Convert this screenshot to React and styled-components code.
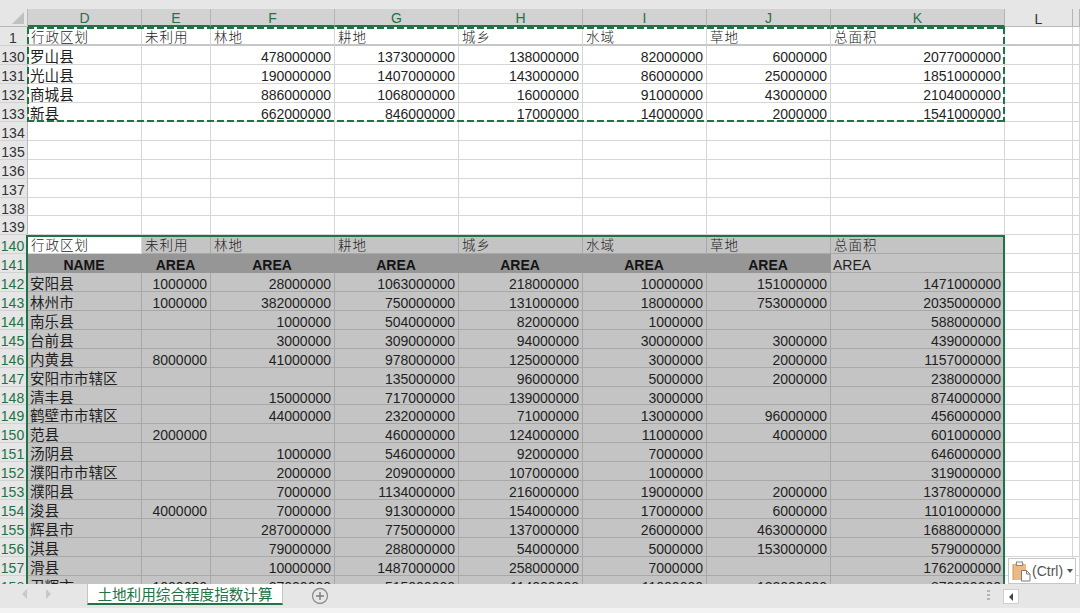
import styled, { createGlobalStyle } from 'styled-components';

const GlobalStyle = createGlobalStyle`
   html, body {
      margin: 0;
      padding: 0;
      background: #ffffff;
   }
`;

const GREEN = '#217346';
const COLUMNS = '28px 114px 69px 124px 124px 124px 124px 124px 174px 68px 1fr';
const FONT = '"Liberation Sans", "Noto Sans CJK SC", sans-serif';

const Window = styled.div`
   color: #1f1f1f;
   display: flex;
   flex-direction: column;
   font-family: ${FONT};
   height: 613px;
   overflow: hidden;
   position: relative;
   width: 1080px;
`;
const TopStrip = styled.div`
   background: #e6e6e6;
   flex: 0 0 9px;
`;
const Sheet = styled.div`
   flex: 1;
   min-height: 0;
   overflow: hidden;
`;
const HeaderRow = styled.div`
   display: grid;
   grid-template-columns: ${COLUMNS};
   height: 18px;
`;
const Corner = styled.div`
   background: #e6e6e6;
   border-bottom: 1px solid #b8b8b8;
   border-right: 1px solid #b8b8b8;
   box-sizing: border-box;
   position: relative;
   &:after {
      border-bottom: 12px solid #c0c0c0;
      border-left: 12px solid transparent;
      bottom: 2px;
      content: '';
      position: absolute;
      right: 3px;
   }
`;
const ColHead = styled.div`
   align-items: center;
   background: ${p => (p.$active ? '#d2d2d2' : '#e6e6e6')};
   border-bottom: ${p => (p.$active ? `2px solid ${GREEN}` : '1px solid #b8b8b8')};
   border-right: 1px solid #b4b4b4;
   box-sizing: border-box;
   color: ${p => (p.$active ? GREEN : '#333333')};
   display: flex;
   font-size: 14px;
   justify-content: center;
   line-height: 14px;
   padding-top: 2px;
`;
const Body = styled.div`
   position: relative;
`;
// the sheet's rows average 18.9px: nine of 19px, then one of 18px
const Row = styled.div`
   display: grid;
   grid-template-columns: ${COLUMNS};
   grid-template-rows: minmax(0, 1fr);
   height: 19px;
   &:nth-child(10n) {
      height: 18px;
   }
`;
const RowHead = styled.div`
   align-items: center;
   background: #e6e6e6;
   border-bottom: 1px solid #d2d2d2;
   border-right: ${p => (p.$active ? `2px solid ${GREEN}` : '1px solid #b8b8b8')};
   box-sizing: border-box;
   color: ${p => (p.$active ? GREEN : '#333333')};
   display: flex;
   font-size: 14px;
   justify-content: center;
   line-height: 14px;
   overflow: hidden;
   padding: 4px 1px 0 0;
`;
const tones = {
   plain: { background: '#ffffff', line: '#d6d6d6' },
   grey: { background: '#c4c4c4', line: '#a8a8a8' },
   dark: { background: '#969696', line: '#969696' },
};
const Cell = styled.div`
   align-items: center;
   background: ${p => tones[p.$tone].background};
   border-bottom: ${p => (p.$heavy ? '2px solid #c6c6c6' : `1px solid ${tones[p.$tone].line}`)};
   border-right: 1px solid ${p => tones[p.$tone].line};
   box-sizing: border-box;
   display: flex;
   font-size: 14px;
   justify-content: ${p => p.$align};
   line-height: 14px;
   overflow: hidden;
   padding: 4px 3px 0 2px;
   white-space: nowrap;
`;
const Name = styled.span`
   font-size: 14.6px;
`;
const Label = styled.span`
   color: #222222;
   font-size: 13.5px;
   font-weight: 300;
   letter-spacing: 1px;
   margin-left: 1px;
`;
const Strong = styled.span`
   color: #141414;
   font-weight: 700;
`;
const dash = `${GREEN} 0 7px, transparent 7px 10px`;
const CopyFrame = styled.div`
   background:
      repeating-linear-gradient(90deg, ${dash}) left top / 100% 2px no-repeat,
      repeating-linear-gradient(90deg, ${dash}) left bottom / 100% 2px no-repeat,
      repeating-linear-gradient(180deg, ${dash}) left top / 2px 100% no-repeat,
      repeating-linear-gradient(180deg, ${dash}) right top / 2px 100% no-repeat;
   height: 95px;
   left: 27px;
   pointer-events: none;
   position: absolute;
   top: 0;
   width: 978px;
`;
const SelectFrame = styled.div`
   border: 2px solid ${GREEN};
   box-sizing: border-box;
   height: 420px;
   left: 26px;
   pointer-events: none;
   position: absolute;
   top: 208px;
   width: 979px;
`;
const PasteButton = styled.div`
   align-items: center;
   background: #ffffff;
   border: 1px solid #c6c6c6;
   bottom: 29px;
   box-sizing: border-box;
   color: #555555;
   display: flex;
   font-size: 14px;
   height: 26px;
   left: 1008px;
   padding-left: 3px;
   position: absolute;
   width: 68px;
`;
const Caret = styled.span`
   border-left: 3px solid transparent;
   border-right: 3px solid transparent;
   border-top: 4px solid #555555;
   margin-left: 4px;
`;
const Footer = styled.div`
   background: #e6e6e6;
   border-bottom: 5px solid #f3f3f3;
   display: flex;
   flex: 0 0 24px;
   height: 24px;
`;
const SheetNav = styled.div`
   align-items: center;
   box-sizing: border-box;
   display: flex;
   flex: 0 0 87px;
   gap: 19px;
   padding: 0 0 4px 22px;
`;
const NavArrow = styled.span`
   border-bottom: 5px solid transparent;
   border-top: 5px solid transparent;
   ${p =>
      p.$left
         ? 'border-right: 5px solid #c8c8c8;'
         : 'border-left: 5px solid #c8c8c8;'}
`;
const SheetTab = styled.div`
   align-items: center;
   background: #ffffff;
   border-bottom: 2px solid ${GREEN};
   border-left: 1px solid #c4c4c4;
   border-right: 1px solid #c4c4c4;
   box-sizing: border-box;
   color: ${GREEN};
   display: flex;
   flex: 0 0 196px;
   font-size: 14.6px;
   height: 21px;
   justify-content: center;
`;
const AddSheet = styled.div`
   align-items: center;
   display: flex;
   flex: 0 0 18px;
   height: 24px;
   margin-left: 28px;
`;
const Spacer = styled.div`
   flex: 1;
`;
const Grip = styled.div`
   display: flex;
   flex-direction: column;
   gap: 2px;
   margin: 6px 13px 0 0;
   & span {
      background: #b4b4b4;
      height: 2px;
      width: 3px;
   }
`;
const ScrollLeft = styled.div`
   align-items: center;
   background: #ffffff;
   border: 1px solid #d0d0d0;
   box-sizing: border-box;
   display: flex;
   flex: 0 0 16px;
   height: 15px;
   justify-content: center;
   margin-top: 5px;
`;
const ScrollTrack = styled.div`
   background-color: #e6e6e6;
   background-image: radial-gradient(#cfcfcf 0.6px, transparent 0.7px);
   background-size: 2px 2px;
   flex: 0 0 61px;
   height: 15px;
   margin-top: 5px;
`;
const LeftTip = styled.span`
   border-bottom: 4px solid transparent;
   border-right: 4px solid #444444;
   border-top: 4px solid transparent;
`;

const columns = ['D', 'E', 'F', 'G', 'H', 'I', 'J', 'K'];
const labels = ['行政区划', '未利用', '林地', '耕地', '城乡', '水域', '草地', '总面积'];

const topRows = [
   [130, '罗山县', '', 478000000, 1373000000, 138000000, 82000000, 6000000, 2077000000],
   [131, '光山县', '', 190000000, 1407000000, 143000000, 86000000, 25000000, 1851000000],
   [132, '商城县', '', 886000000, 1068000000, 16000000, 91000000, 43000000, 2104000000],
   [133, '新县', '', 662000000, 846000000, 17000000, 14000000, 2000000, 1541000000],
];
const selectedRows = [
   [142, '安阳县', 1000000, 28000000, 1063000000, 218000000, 10000000, 151000000, 1471000000],
   [143, '林州市', 1000000, 382000000, 750000000, 131000000, 18000000, 753000000, 2035000000],
   [144, '南乐县', '', 1000000, 504000000, 82000000, 1000000, '', 588000000],
   [145, '台前县', '', 3000000, 309000000, 94000000, 30000000, 3000000, 439000000],
   [146, '内黄县', 8000000, 41000000, 978000000, 125000000, 3000000, 2000000, 1157000000],
   [147, '安阳市市辖区', '', '', 135000000, 96000000, 5000000, 2000000, 238000000],
   [148, '清丰县', '', 15000000, 717000000, 139000000, 3000000, '', 874000000],
   [149, '鹤壁市市辖区', '', 44000000, 232000000, 71000000, 13000000, 96000000, 456000000],
   [150, '范县', 2000000, '', 460000000, 124000000, 11000000, 4000000, 601000000],
   [151, '汤阴县', '', 1000000, 546000000, 92000000, 7000000, '', 646000000],
   [152, '濮阳市市辖区', '', 2000000, 209000000, 107000000, 1000000, '', 319000000],
   [153, '濮阳县', '', 7000000, 1134000000, 216000000, 19000000, 2000000, 1378000000],
   [154, '浚县', 4000000, 7000000, 913000000, 154000000, 17000000, 6000000, 1101000000],
   [155, '辉县市', '', 287000000, 775000000, 137000000, 26000000, 463000000, 1688000000],
   [156, '淇县', '', 79000000, 288000000, 54000000, 5000000, 153000000, 579000000],
   [157, '滑县', '', 10000000, 1487000000, 258000000, 7000000, '', 1762000000],
   [158, '卫辉市', 1000000, 27000000, 515000000, 114000000, 11000000, 133000000, 870000000],
];

const OuterCells = ({ heavy }) => (
   <>
      <Cell $tone='plain' $align='flex-start' $heavy={heavy} />
      <Cell $tone='plain' $align='flex-start' $heavy={heavy} />
   </>
);

const LabelRow = ({ number, active, tone, heavy }) => (
   <Row>
      <RowHead $active={active}>{number}</RowHead>
      {labels.map((label, i) => (
         <Cell key={label} $tone={tone && i > 0 ? tone : 'plain'} $align='flex-start' $heavy={heavy}>
            <Label>{label}</Label>
         </Cell>
      ))}
      <OuterCells heavy={heavy} />
   </Row>
);

const DataRow = ({ row, active, tone }) => {
   const [number, name, ...values] = row;
   return (
      <Row>
         <RowHead $active={active}>{number}</RowHead>
         <Cell $tone={tone} $align='flex-start'>
            <Name>{name}</Name>
         </Cell>
         {values.map((value, i) => (
            <Cell key={i} $tone={tone} $align='flex-end'>
               {value}
            </Cell>
         ))}
         <OuterCells />
      </Row>
   );
};

const EmptyRow = ({ number }) => (
   <Row>
      <RowHead>{number}</RowHead>
      {columns.map(column => (
         <Cell key={column} $tone='plain' $align='flex-start' />
      ))}
      <OuterCells />
   </Row>
);

const ClipboardIcon = () => (
   <svg width='20' height='21' viewBox='0 0 20 21'>
      <rect x='1' y='3' width='13' height='16' fill='#ecb982' />
      <path d='M3 3h9M1 3v16' stroke='#c99a66' fill='none' />
      <rect x='4.5' y='1' width='6' height='3.5' fill='#f4f4f4' stroke='#8a8a8a' />
      <path d='M9.5 9.5h5l3.5 3.5v7h-8.500z' fill='#ffffff' stroke='#7a7a7a' />
      <path d='M14.500 9.500v3.500h3.500' fill='none' stroke='#7a7a7a' />
   </svg>
);

const AddIcon = () => (
   <svg width='18' height='18' viewBox='0 0 18 18'>
      <circle cx='9' cy='9' r='7.500' fill='none' stroke='#8c8c8c' strokeWidth='1.300' />
      <path d='M5 9h8M9 5v8' stroke='#7c7c7c' strokeWidth='1.400' />
   </svg>
);

const App = () => (
   <Window>
      <GlobalStyle />
      <TopStrip />
      <Sheet>
         <HeaderRow>
            <Corner />
            {columns.map(column => (
               <ColHead key={column} $active>
                  {column}
               </ColHead>
            ))}
            <ColHead>L</ColHead>
            <ColHead />
         </HeaderRow>
         <Body>
            <LabelRow number={1} heavy />
            {topRows.map(row => (
               <DataRow key={row[0]} row={row} tone='plain' />
            ))}
            {[134, 135, 136, 137, 138, 139].map(number => (
               <EmptyRow key={number} number={number} />
            ))}
            <LabelRow number={140} active tone='grey' />
            <Row>
               <RowHead $active>141</RowHead>
               {['NAME', 'AREA', 'AREA', 'AREA', 'AREA', 'AREA', 'AREA'].map((title, i) => (
                  <Cell key={i} $tone='dark' $align='center'>
                     <Strong>{title}</Strong>
                  </Cell>
               ))}
               <Cell $tone='grey' $align='flex-start'>AREA</Cell>
               <OuterCells />
            </Row>
            {selectedRows.map(row => (
               <DataRow key={row[0]} row={row} active tone='grey' />
            ))}
            <CopyFrame />
            <SelectFrame />
         </Body>
      </Sheet>
      <PasteButton>
         <ClipboardIcon />
         (Ctrl)
         <Caret />
      </PasteButton>
      <Footer>
         <SheetNav>
            <NavArrow $left />
            <NavArrow />
         </SheetNav>
         <SheetTab>土地利用综合程度指数计算</SheetTab>
         <AddSheet>
            <AddIcon />
         </AddSheet>
         <Spacer />
         <Grip>
            <span />
            <span />
            <span />
         </Grip>
         <ScrollLeft>
            <LeftTip />
         </ScrollLeft>
         <ScrollTrack />
      </Footer>
   </Window>
);

export default App;
